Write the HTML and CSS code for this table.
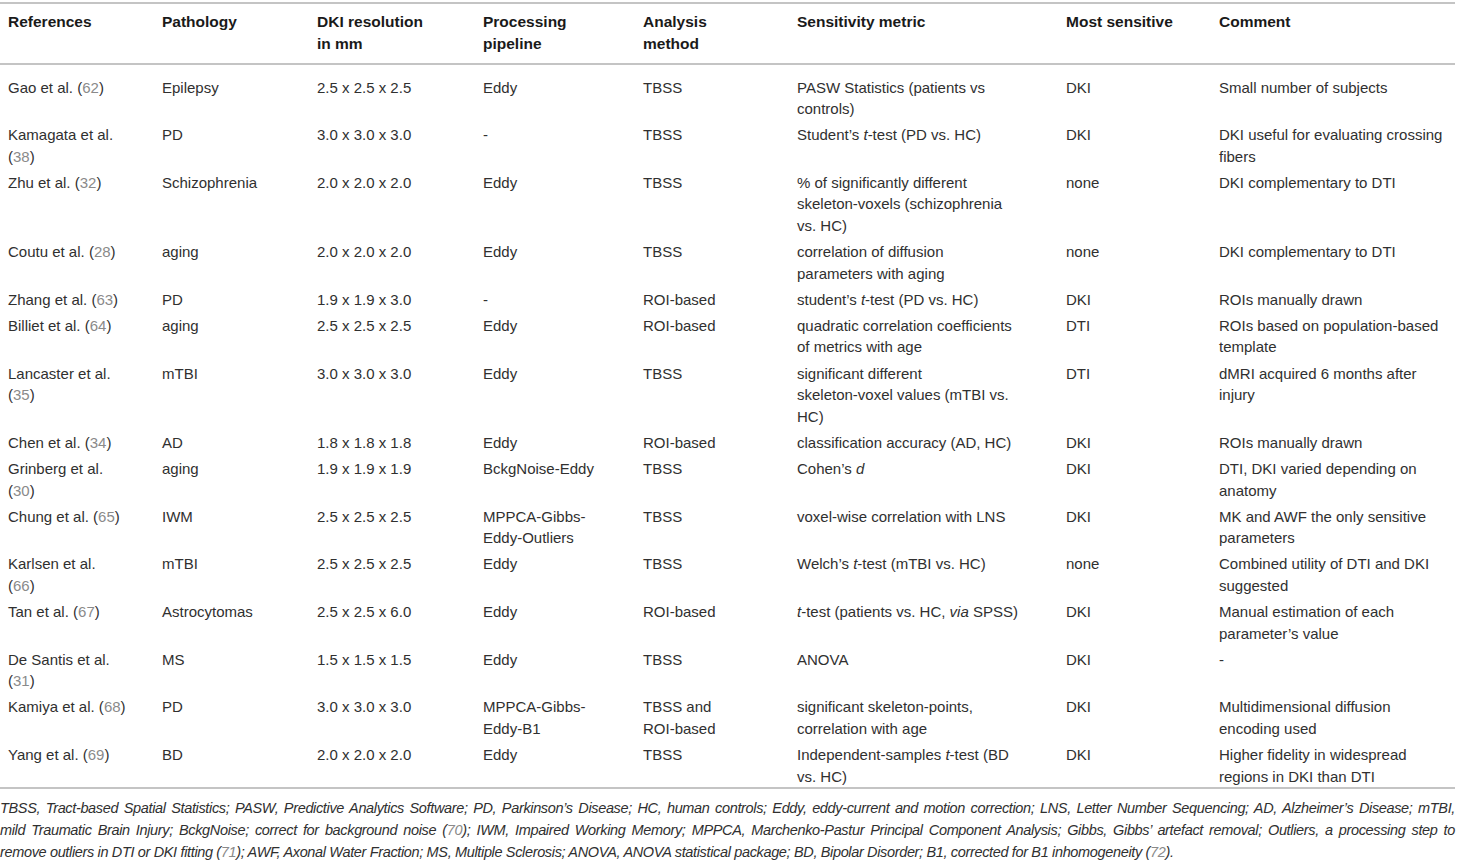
FILE: index.html
```html
<!DOCTYPE html>
<html>
<head>
<meta charset="utf-8">
<link rel="stylesheet" href="styles.css">
</head>
<body>
<div class="wrap">
<table class="tbl">
<colgroup>
<col class="c1"><col class="c2"><col class="c3"><col class="c4"><col class="c5"><col class="c6"><col class="c7"><col class="c8">
</colgroup>
<thead>
<tr>
<th>References</th><th>Pathology</th><th>DKI resolution<br>in mm</th><th>Processing<br>pipeline</th><th>Analysis<br>method</th><th>Sensitivity metric</th><th>Most sensitive</th><th>Comment</th>
</tr>
</thead>
<tbody>
<tr><td>Gao et al. (<span class="ref">62</span>)</td><td>Epilepsy</td><td>2.5 x 2.5 x 2.5</td><td>Eddy</td><td>TBSS</td><td>PASW Statistics (patients vs<br>controls)</td><td>DKI</td><td>Small number of subjects</td></tr>
<tr><td>Kamagata et al.<br>(<span class="ref">38</span>)</td><td>PD</td><td>3.0 x 3.0 x 3.0</td><td>-</td><td>TBSS</td><td>Student’s <i>t</i>-test (PD vs. HC)</td><td>DKI</td><td>DKI useful for evaluating crossing<br>fibers</td></tr>
<tr><td>Zhu et al. (<span class="ref">32</span>)</td><td>Schizophrenia</td><td>2.0 x 2.0 x 2.0</td><td>Eddy</td><td>TBSS</td><td>% of significantly different<br>skeleton-voxels (schizophrenia<br>vs. HC)</td><td>none</td><td>DKI complementary to DTI</td></tr>
<tr><td>Coutu et al. (<span class="ref">28</span>)</td><td>aging</td><td>2.0 x 2.0 x 2.0</td><td>Eddy</td><td>TBSS</td><td>correlation of diffusion<br>parameters with aging</td><td>none</td><td>DKI complementary to DTI</td></tr>
<tr><td>Zhang et al. (<span class="ref">63</span>)</td><td>PD</td><td>1.9 x 1.9 x 3.0</td><td>-</td><td>ROI-based</td><td>student’s <i>t</i>-test (PD vs. HC)</td><td>DKI</td><td>ROIs manually drawn</td></tr>
<tr><td>Billiet et al. (<span class="ref">64</span>)</td><td>aging</td><td>2.5 x 2.5 x 2.5</td><td>Eddy</td><td>ROI-based</td><td>quadratic correlation coefficients<br>of metrics with age</td><td>DTI</td><td>ROIs based on population-based<br>template</td></tr>
<tr><td>Lancaster et al.<br>(<span class="ref">35</span>)</td><td>mTBI</td><td>3.0 x 3.0 x 3.0</td><td>Eddy</td><td>TBSS</td><td>significant different<br>skeleton-voxel values (mTBI vs.<br>HC)</td><td>DTI</td><td>dMRI acquired 6 months after<br>injury</td></tr>
<tr><td>Chen et al. (<span class="ref">34</span>)</td><td>AD</td><td>1.8 x 1.8 x 1.8</td><td>Eddy</td><td>ROI-based</td><td>classification accuracy (AD, HC)</td><td>DKI</td><td>ROIs manually drawn</td></tr>
<tr><td>Grinberg et al.<br>(<span class="ref">30</span>)</td><td>aging</td><td>1.9 x 1.9 x 1.9</td><td>BckgNoise-Eddy</td><td>TBSS</td><td>Cohen’s <i>d</i></td><td>DKI</td><td>DTI, DKI varied depending on<br>anatomy</td></tr>
<tr><td>Chung et al. (<span class="ref">65</span>)</td><td>IWM</td><td>2.5 x 2.5 x 2.5</td><td>MPPCA-Gibbs-<br>Eddy-Outliers</td><td>TBSS</td><td>voxel-wise correlation with LNS</td><td>DKI</td><td>MK and AWF the only sensitive<br>parameters</td></tr>
<tr><td>Karlsen et al.<br>(<span class="ref">66</span>)</td><td>mTBI</td><td>2.5 x 2.5 x 2.5</td><td>Eddy</td><td>TBSS</td><td>Welch’s <i>t</i>-test (mTBI vs. HC)</td><td>none</td><td>Combined utility of DTI and DKI<br>suggested</td></tr>
<tr><td>Tan et al. (<span class="ref">67</span>)</td><td>Astrocytomas</td><td>2.5 x 2.5 x 6.0</td><td>Eddy</td><td>ROI-based</td><td><i>t</i>-test (patients vs. HC, <i>via</i> SPSS)</td><td>DKI</td><td>Manual estimation of each<br>parameter’s value</td></tr>
<tr><td>De Santis et al.<br>(<span class="ref">31</span>)</td><td>MS</td><td>1.5 x 1.5 x 1.5</td><td>Eddy</td><td>TBSS</td><td>ANOVA</td><td>DKI</td><td>-</td></tr>
<tr><td>Kamiya et al. (<span class="ref">68</span>)</td><td>PD</td><td>3.0 x 3.0 x 3.0</td><td>MPPCA-Gibbs-<br>Eddy-B1</td><td>TBSS and<br>ROI-based</td><td>significant skeleton-points,<br>correlation with age</td><td>DKI</td><td>Multidimensional diffusion<br>encoding used</td></tr>
<tr><td>Yang et al. (<span class="ref">69</span>)</td><td>BD</td><td>2.0 x 2.0 x 2.0</td><td>Eddy</td><td>TBSS</td><td>Independent-samples <i>t</i>-test (BD<br>vs. HC)</td><td>DKI</td><td>Higher fidelity in widespread<br>regions in DKI than DTI</td></tr>
</tbody>
</table>
<div class="foot">
<span class="fl">TBSS, Tract-based Spatial Statistics; PASW, Predictive Analytics Software; PD, Parkinson’s Disease; HC, human controls; Eddy, eddy-current and motion correction; LNS, Letter Number Sequencing; AD, Alzheimer’s Disease; mTBI,</span>
<span class="fl">mild Traumatic Brain Injury; BckgNoise; correct for background noise (<span class="ref">70</span>); IWM, Impaired Working Memory; MPPCA, Marchenko-Pastur Principal Component Analysis; Gibbs, Gibbs’ artefact removal; Outliers, a processing step to</span>
<span class="fl last">remove outliers in DTI or DKI fitting (<span class="ref">71</span>); AWF, Axonal Water Fraction; MS, Multiple Sclerosis; ANOVA, ANOVA statistical package; BD, Bipolar Disorder; B1, corrected for B1 inhomogeneity (<span class="ref">72</span>).</span>
</div>
</div>
</body>
</html>
```

FILE: styles.css
```css
html, body {
  margin: 0;
  padding: 0;
  background: #ffffff;
}
body {
  font-family: "Liberation Sans", Arial, sans-serif;
  color: #303030;
  font-size: 15px;
}
.wrap {
  width: 1455px;
  padding-top: 2px;
}
.tbl {
  width: 1455px;
  border-collapse: collapse;
  table-layout: fixed;
}
.c1 { width: 154px; }
.c2 { width: 155px; }
.c3 { width: 166px; }
.c4 { width: 160px; }
.c5 { width: 154px; }
.c6 { width: 269px; }
.c7 { width: 153px; }
.c8 { width: 244px; }
.tbl thead tr {
  border-top: 2px solid #c4c4c4;
  border-bottom: 2px solid #c4c4c4;
}
.tbl th {
  text-align: left;
  vertical-align: top;
  font-weight: bold;
  font-size: 15.5px;
  color: #1a1a1a;
  line-height: 21.5px;
  padding: 7px 4px 9px 8px;
}
.tbl td {
  vertical-align: top;
  line-height: 21.5px;
  padding: 4.7px 4px 0 8px;
}
.tbl tbody tr:first-child td {
  padding-top: 11.5px;
}
.tbl tbody tr:last-child {
  border-bottom: 2px solid #c4c4c4;
}
.ref {
  color: #8a8a8a;
}
.foot {
  padding-top: 8px;
  font-style: italic;
  font-size: 14.5px;
  line-height: 22px;
  letter-spacing: -0.35px;
  color: #303030;
}
.fl {
  display: block;
  white-space: nowrap;
  text-align: justify;
  text-align-last: justify;
}
.fl.last {
  text-align-last: left;
}
```
